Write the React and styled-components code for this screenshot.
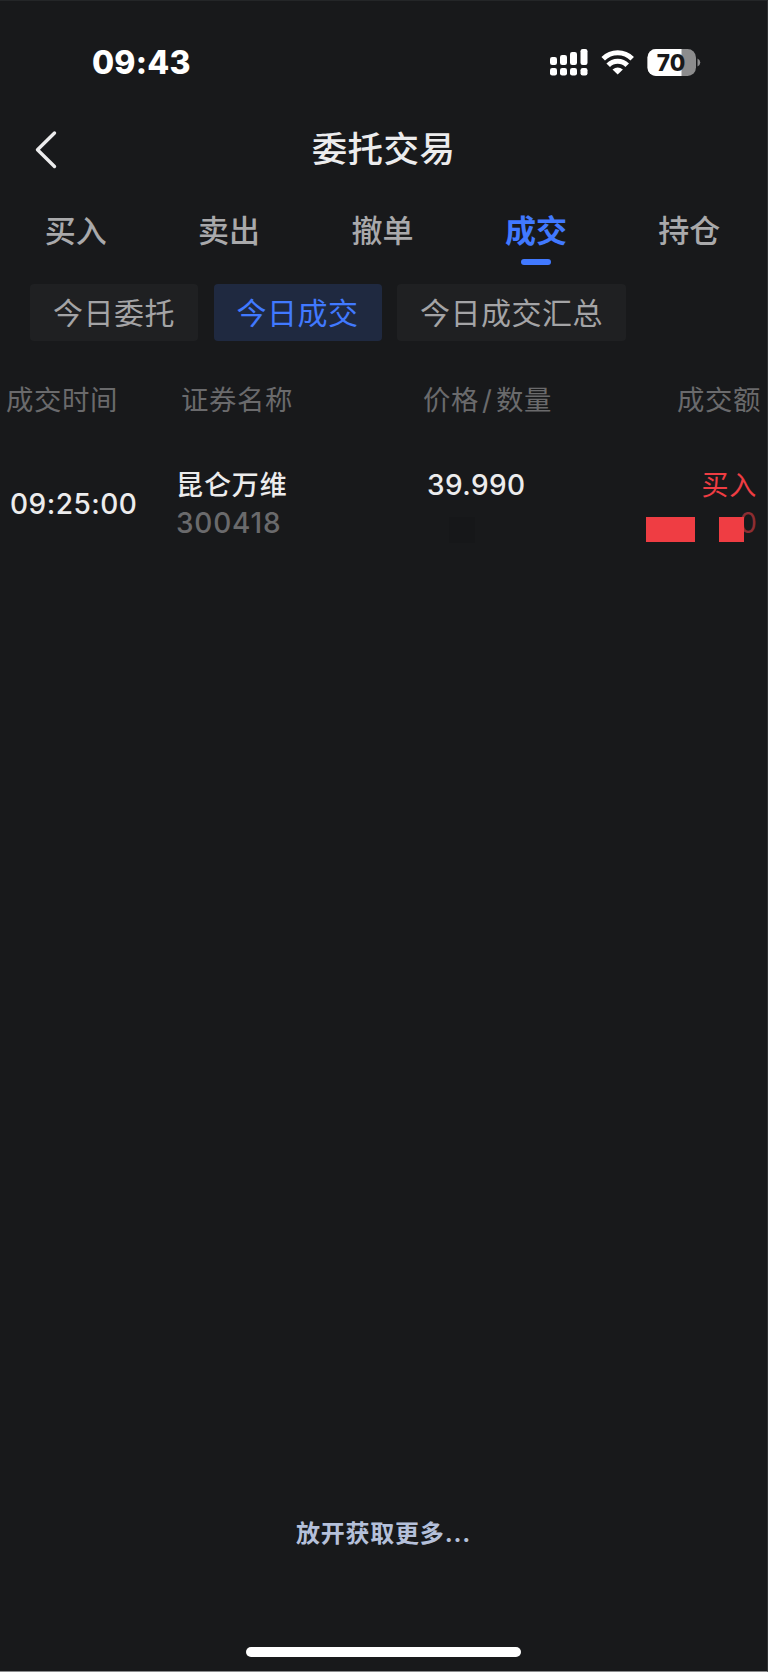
import React from "react";
import styled, { createGlobalStyle } from "styled-components";

const Global = createGlobalStyle`
  * { box-sizing: border-box; }
  html, body { margin: 0; padding: 0; background: #18191b; }
  body { font-family: Inter, "Noto Sans CJK SC", sans-serif; }
`;

const Screen = styled.main`
  width: 768px;
  height: 1672px;
  display: flex;
  flex-direction: column;
  overflow: hidden;
  background: #18191b;
  border-top: 1px solid #242628;
  border-right: 1px solid #303234;
  border-bottom: 1px solid #8a8b8d;
`;

const StatusBar = styled.header`
  height: 102px;
  padding: 20px 66px 2px 92px;
  display: flex;
  align-items: center;
  justify-content: space-between;
`;

const Clock = styled.time`
  padding-top: 4px;
  font-size: 32px;
  font-weight: 800;
  line-height: 40px;
  letter-spacing: 0.2px;
  color: #fff;
`;

const StatusIcons = styled.svg`
  display: block;
  width: 152px;
  height: 32px;
`;

const BatteryText = styled.text`
  font-family: Inter, sans-serif;
  font-size: 22.5px;
  font-weight: 800;
`;

const TitleBar = styled.div`
  height: 94px;
  display: grid;
  grid-template-columns: 92px 1fr 92px;
  align-items: center;
`;

const BackButton = styled.button`
  display: flex;
  padding: 0 0 0 34px;
  border: 0;
  background: none;
`;

const Title = styled.h1`
  margin: 0;
  text-align: center;
  font-size: 35.5px;
  line-height: 48px;
  font-weight: 500;
  letter-spacing: 0.4px;
  color: #ececed;
`;

const Tabs = styled.nav`
  height: 87px;
  display: flex;
  margin: 0 1px 0 -1px;
`;

const Tab = styled.button`
  flex: 1;
  padding: 14px 0 0;
  border: 0;
  background: none;
  display: flex;
  flex-direction: column;
  align-items: center;
  gap: 8px;
  font-family: inherit;
  font-size: 31px;
  line-height: 39px;
  font-weight: ${(p) => (p.$active ? 700 : 500)};
  color: ${(p) => (p.$active ? "#4179ff" : "#a9a9ab")};

  &::after {
    content: "";
    width: 30px;
    height: 6px;
    margin-top: 1px;
    border-radius: 3px;
    background: ${(p) => (p.$active ? "#4179ff" : "transparent")};
  }
`;

const Chips = styled.div`
  display: flex;
  gap: 15.5px;
  padding-left: 30px;
`;

const Chip = styled.button`
  height: 57px;
  padding: 0 23px;
  border: 0;
  border-radius: 4px;
  font-family: inherit;
  font-size: 30px;
  line-height: 56px;
  letter-spacing: 0.5px;
  white-space: nowrap;
  background: ${(p) => (p.$active ? "#1f2940" : "#1f2022")};
  color: ${(p) => (p.$active ? "#4179ff" : "#a4a4a6")};
`;

const Columns = styled.div`
  display: grid;
  grid-template-columns: 175px 248px 1fr auto;
`;

const HeadRow = styled(Columns)`
  height: 40px;
  margin-top: 40px;
  padding: 0 6px;
  font-size: 27.4px;
  line-height: 38px;
  letter-spacing: 0.6px;
  color: #6a6a6c;
`;

const HeadCell = styled.span`
  white-space: nowrap;
  margin-left: ${(p) => p.$shift || 0}px;
`;

const Slash = styled.span`
  margin: 0 3.5px 0 3px;
`;

const Row = styled(Columns)`
  margin-top: 45px;
  padding: 0 10px;
  grid-template-columns: 166px 251px 1fr auto;
  font-size: 28px;
  font-weight: 500;
  color: #ececed;
`;

const Cell = styled.div`
  display: flex;
  flex-direction: column;
  align-items: ${(p) => (p.$end ? "flex-end" : "flex-start")};
`;

const Time = styled.div`
  align-self: center;
  padding-bottom: 2px;
  line-height: 40px;
  letter-spacing: 0.5px;
`;

const Name = styled.span`
  height: 38px;
  font-size: 27px;
  line-height: 40px;
  letter-spacing: 0.9px;
`;

const Code = styled.span`
  line-height: 38px;
  letter-spacing: 0.8px;
  color: #6a6a6c;
`;

const Price = styled.span`
  line-height: 38px;
  letter-spacing: 0.4px;
`;

const Side = styled.span`
  height: 38px;
  font-size: 27px;
  font-weight: 400;
  line-height: 40px;
  letter-spacing: 0.8px;
  color: #ef3d43;
`;

const Amount = styled.div`
  height: 38px;
  display: flex;
  align-items: flex-start;
  font-weight: 400;
  line-height: 38px;
  color: #8e2d32;
`;

const Mask = styled.span`
  z-index: 1;
  width: ${(p) => p.$w}px;
  height: 25px;
  margin-top: 13px;
  margin-right: ${(p) => p.$gap}px;
  background: #ef3d43;
`;

const DarkMask = styled.span`
  width: 26px;
  height: 26px;
  margin: 13px 0 0 22px;
  background: #161719;
`;

const Footer = styled.footer`
  flex: 1;
  display: flex;
  flex-direction: column;
  justify-content: flex-end;
  align-items: center;
`;

const LoadMore = styled.p`
  margin: 0 0 96px;
  font-size: 24px;
  font-weight: 700;
  line-height: 34px;
  letter-spacing: 0.8px;
  color: #b5c0da;
`;

const HomeBar = styled.div`
  width: 275px;
  height: 10px;
  margin-bottom: 14px;
  border-radius: 5px;
  background: #fff;
`;

const TABS = ["买入", "卖出", "撤单", "成交", "持仓"];
const FILTERS = ["今日委托", "今日成交", "今日成交汇总"];
const BARS = [
  [0, 12, 8],
  [10, 10, 10],
  [20, 7, 13],
  [30.5, 4, 16],
];

export default function App() {
  return (
    <Screen>
      <Global />
      <StatusBar>
        <Clock>09:43</Clock>
        <StatusIcons viewBox="549 45 152 32">
          {BARS.map(([x, y, h]) => (
            <g key={x} fill="#fff">
              <rect x={550 + x} y={45 + y} width="7" height={h} rx="2.2" />
              <rect x={550 + x} y="68" width="7" height="7.5" rx="2.2" />
            </g>
          ))}
          <g fill="none" stroke="#fff" strokeWidth="5">
            <path d="M603.200 58.700A20.500 20.500 0 0 1 632.200 58.700" />
            <path d="M608.200 65.300A13.200 13.200 0 0 1 627.200 65.300" />
          </g>
          <path d="M612.500 69.500Q617.700 65.600 622.900 69.500L617.700 74.500Z" fill="#fff" />
          <clipPath id="battery">
            <rect x="647.500" y="49" width="48.500" height="27" rx="8.500" />
          </clipPath>
          <g clipPath="url(#battery)">
            <rect x="647" y="48" width="50" height="29" fill="#8c8c8d" />
            <rect x="647" y="48" width="34.500" height="29" fill="#fff" />
          </g>
          <path d="M697.500 58.500Q700.300 60 700.300 62.500T697.500 66.500Z" fill="#8c8c8d" />
          <BatteryText x="671" y="70.500" textAnchor="middle" fill="#18191b">70</BatteryText>
        </StatusIcons>
      </StatusBar>
      <TitleBar>
        <BackButton aria-label="返回">
          <svg width="24" height="40" viewBox="34 130 24 40">
            <path d="M54.500 133L37.500 149.700L54.500 166.500" fill="none" stroke="#ececed" strokeWidth="3.400" strokeLinecap="round" strokeLinejoin="round" />
          </svg>
        </BackButton>
        <Title>委托交易</Title>
      </TitleBar>
      <Tabs>
        {TABS.map((t) => (
          <Tab key={t} $active={t === "成交"}>{t}</Tab>
        ))}
      </Tabs>
      <Chips>
        {FILTERS.map((t) => (
          <Chip key={t} $active={t === "今日成交"}>{t}</Chip>
        ))}
      </Chips>
      <HeadRow>
        <HeadCell>成交时间</HeadCell>
        <HeadCell>证券名称</HeadCell>
        <HeadCell $shift={-6}>价格<Slash>/</Slash>数量</HeadCell>
        <HeadCell>成交额</HeadCell>
      </HeadRow>
      <Row>
        <Time>09:25:00</Time>
        <Cell>
          <Name>昆仑万维</Name>
          <Code>300418</Code>
        </Cell>
        <Cell>
          <Price>39.990</Price>
          <DarkMask />
        </Cell>
        <Cell $end>
          <Side>买入</Side>
          <Amount>
            <Mask $w={49} $gap={24} />
            <Mask $w={25} $gap={-5} />
            0
          </Amount>
        </Cell>
      </Row>
      <Footer>
        <LoadMore>放开获取更多...</LoadMore>
        <HomeBar />
      </Footer>
    </Screen>
  );
}
